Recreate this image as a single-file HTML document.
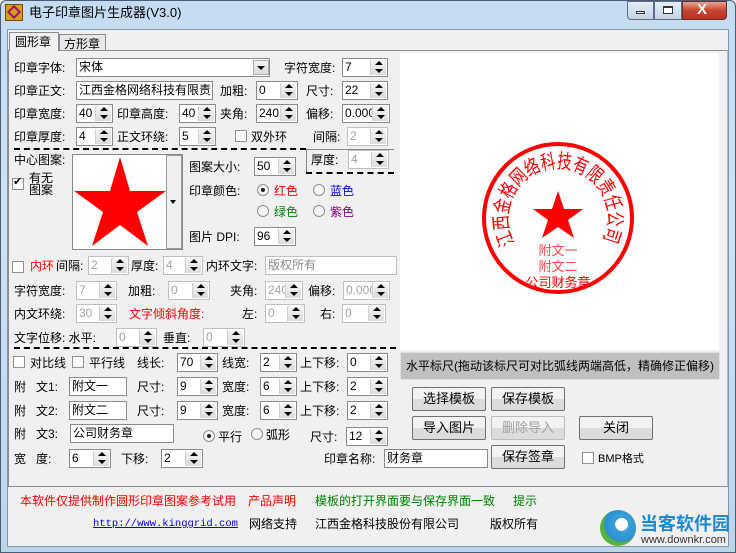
<!DOCTYPE html>
<html><head><meta charset="utf-8">
<style>
*{margin:0;padding:0;box-sizing:border-box}
body{width:736px;height:553px;overflow:hidden;background:#fff;font:12px "Liberation Sans","WenQuanYi Zen Hei","Noto Sans CJK SC",sans-serif;color:#000;position:relative}
.a{position:absolute;white-space:nowrap;line-height:14px}
.sp{position:absolute;height:19px;background:#fff;border:1px solid #8a8a8a;font:12px "Liberation Sans",sans-serif;padding:1px 0 0 2px;line-height:15px;overflow:hidden}
.sp.d{color:#a0a0a0;border-color:#c0c0c0}
.sp i{position:absolute;right:1px;top:1px;width:16px;height:15px;background:linear-gradient(#f4f4f4,#dcdcdc);border-left:1px solid #d0d0d0}
.sp i:before{content:"";position:absolute;left:4px;top:1px;border:4px solid transparent;border-bottom:4px solid #000;border-top:0}
.sp i:after{content:"";position:absolute;left:4px;top:9px;border:4px solid transparent;border-top:4px solid #000;border-bottom:0}
.tx{position:absolute;height:19px;background:#fff;border:1px solid #8a8a8a;padding:1px 2px;line-height:15px;overflow:hidden;white-space:nowrap}
.cb{position:absolute;width:12px;height:12px;border:1px solid #8e8f8f;background:#fff}
.rb{position:absolute;width:12px;height:12px;border:1px solid #8e8f8f;border-radius:50%;background:#f4f4f4}
.rb.on:after{content:"";position:absolute;left:3px;top:3px;width:4px;height:4px;border-radius:50%;background:#222}
.bt{position:absolute;height:24px;width:74px;border:1px solid #707070;border-radius:2px;background:linear-gradient(#f2f2f2 50%,#dcdcdc 50%);text-align:center;line-height:22px;font-size:13px}
.dash{position:absolute;height:0;border-top:2px dashed #000}
.r{color:#f00}.g{color:#008000}
</style></head><body>
<div class="a" style="left:0;top:0;width:736px;height:553px;background:linear-gradient(#c4dcf2,#cfe2f4 40%,#bcd4ec);border:1px solid #4b5d75;border-radius:6px 6px 0 0"></div>
<div class="a" style="left:5px;top:4px;width:18px;height:17px;background:#d4a017;border:1px solid #7a4b00"></div>
<div class="a" style="left:9px;top:7px;width:10px;height:10px;border:2px solid #a01070;transform:rotate(45deg)"></div>
<div class="a" style="left:29px;top:6px;font-size:13px">电子印章图片生成器(V3.0)</div>
<div class="a" style="left:627px;top:1px;width:27px;height:19px;border:1px solid #5a6e86;border-radius:0 0 0 4px;background:linear-gradient(#e4edf7,#c3d3e6)"></div>
<div class="a" style="left:636px;top:11px;width:9px;height:3px;background:#fff;border:1px solid #333"></div>
<div class="a" style="left:654px;top:1px;width:28px;height:19px;border:1px solid #5a6e86;background:linear-gradient(#e4edf7,#c3d3e6)"></div>
<div class="a" style="left:663px;top:6px;width:10px;height:8px;background:#fff;border:1px solid #333;border-top-width:2px"></div>
<div class="a" style="left:682px;top:1px;width:45px;height:19px;border:1px solid #6b2b23;border-radius:0 0 4px 0;background:linear-gradient(#e8a493,#c7442e 50%,#b83220)"></div>
<div class="a" style="left:697px;top:1px;font:bold 15px 'Liberation Sans';color:#fff;line-height:18px">X</div>
<div class="a" style="left:7px;top:29px;width:722px;height:518px;background:#f0f0f0;border:1px solid #8494a9"></div>
<div class="a" style="left:9px;top:32px;width:50px;height:19px;background:#f0f0f0;border:1px solid #898c95;border-bottom:0;z-index:2"></div>
<div class="a" style="left:15px;top:35px;z-index:3">圆形章</div>
<div class="a" style="left:59px;top:34px;width:47px;height:17px;border:1px solid #898c95;border-bottom:0;background:#e8e8e8"></div>
<div class="a" style="left:64px;top:37px">方形章</div>
<div class="a" style="left:8px;top:50px;width:720px;height:437px;border:1px solid #898c95;border-right-color:#bbb"></div>
<div class="a" style="left:400px;top:53px;width:319px;height:297px;background:#fff"></div>
<svg class="a" style="left:0;top:0" width="736" height="553">
<circle cx="558" cy="218" r="74" fill="none" stroke="#f00" stroke-width="4"/>
<polygon fill="#f00" points="558,191 564,209 583,209 568,220 574,238 558,227 542,238 548,220 533,209 552,209"/>
<defs><path id="arc" d="M514.7,243 A50,50 0 1 1 601.3,243"/></defs>
<text fill="#f00" font-size="20" font-family="WenQuanYi Zen Hei,sans-serif"><textPath href="#arc" textLength="206" lengthAdjust="spacingAndGlyphs">江西金格网络科技有限责任公司</textPath></text>
<text x="558" y="255" fill="#f44" font-size="13" text-anchor="middle" font-family="WenQuanYi Zen Hei,sans-serif">附文一</text>
<text x="558" y="271" fill="#f44" font-size="13" text-anchor="middle" font-family="WenQuanYi Zen Hei,sans-serif">附文二</text>
<text x="558" y="287" fill="#f00" font-size="13" text-anchor="middle" font-family="WenQuanYi Zen Hei,sans-serif">公司财务章</text>
</svg>
<div class="a" style="left:400px;top:352px;width:320px;height:28px;background:#c0c0c0;border:1px solid #e0e0e0;padding:6px 5px;line-height:14px">水平标尺(拖动该标尺可对比弧线两端高低，精确修正偏移)</div>
<div class="a" style="left:14px;top:61px">印章字体:</div>
<div class="tx" style="left:76px;top:58px;width:194px">宋体</div>
<div class="a" style="left:253px;top:60px;width:16px;height:15px;background:linear-gradient(#f4f4f4,#dcdcdc);border:1px solid #aaa"></div>
<div class="a" style="left:257px;top:66px;border:4px solid transparent;border-top:4px solid #000;border-bottom:0"></div>
<div class="a" style="left:284px;top:61px">字符宽度:</div>
<div class="sp" style="left:342px;top:58px;width:46px">7<i></i></div>
<div class="a" style="left:14px;top:84px">印章正文:</div>
<div class="tx" style="left:76px;top:81px;width:137px">江西金格网络科技有限责</div>
<div class="a" style="left:220px;top:84px">加粗:</div>
<div class="sp" style="left:256px;top:81px;width:42px">0<i></i></div>
<div class="a" style="left:306px;top:84px">尺寸:</div>
<div class="sp" style="left:342px;top:81px;width:46px">22<i></i></div>
<div class="a" style="left:14px;top:107px">印章宽度:</div>
<div class="sp" style="left:76px;top:104px;width:37px">40<i></i></div>
<div class="a" style="left:117px;top:107px">印章高度:</div>
<div class="sp" style="left:179px;top:104px;width:37px">40<i></i></div>
<div class="a" style="left:220px;top:107px">夹角:</div>
<div class="sp" style="left:256px;top:104px;width:42px">240<i></i></div>
<div class="a" style="left:306px;top:107px">偏移:</div>
<div class="sp" style="left:342px;top:104px;width:48px">0.000<i></i></div>
<div class="a" style="left:14px;top:130px">印章厚度:</div>
<div class="sp" style="left:76px;top:127px;width:37px">4<i></i></div>
<div class="a" style="left:117px;top:130px">正文环绕:</div>
<div class="sp" style="left:179px;top:127px;width:37px">5<i></i></div>
<div class="cb" style="left:235px;top:130px"></div>
<div class="a" style="left:251px;top:130px">双外环</div>
<div class="a" style="left:313px;top:130px">间隔:</div>
<div class="sp d" style="left:347px;top:127px;width:41px">2<i></i></div>
<div class="dash" style="left:14px;top:148px;width:292px"></div>
<div class="a" style="left:306px;top:149px;width:88px;height:24px;border-left:1px solid #888;border-top:1px solid #888"></div>
<div class="dash" style="left:306px;top:172px;width:88px"></div>
<div class="a" style="left:311px;top:153px">厚度:</div>
<div class="sp d" style="left:348px;top:150px;width:41px">4<i></i></div>
<div class="a" style="left:14px;top:153px">中心图案:</div>
<div class="cb" style="left:12px;top:178px"></div>
<div class="a" style="left:13px;top:175px;font-size:11px">✔</div>
<div class="a" style="left:29px;top:172px;line-height:12px">有无<br>图案</div>
<div class="a" style="left:72px;top:154px;width:111px;height:96px;background:#fff;border:1px solid #888"></div>
<div class="a" style="left:166px;top:155px;width:16px;height:94px;background:#f0f0f0;border:1px solid #999"></div>
<div class="a" style="left:170px;top:200px;border:3px solid transparent;border-top:4px solid #000;border-bottom:0"></div>
<svg class="a" style="left:72px;top:154px" width="94" height="96"><polygon fill="#f00" points="48,3 58,37 94,37 65,58 76,92 48,71 20,92 31,58 2,37 38,37"/></svg>
<div class="a" style="left:189px;top:160px">图案大小:</div>
<div class="sp" style="left:254px;top:157px;width:42px">50<i></i></div>
<div class="a" style="left:189px;top:184px">印章颜色:</div>
<div class="rb on" style="left:257px;top:184px"></div><div class="a r" style="left:274px;top:184px">红色</div>
<div class="rb" style="left:313px;top:184px"></div><div class="a" style="left:330px;top:184px;color:#00f">蓝色</div>
<div class="rb" style="left:257px;top:205px"></div><div class="a g" style="left:274px;top:205px">绿色</div>
<div class="rb" style="left:313px;top:205px"></div><div class="a" style="left:330px;top:205px;color:#800080">紫色</div>
<div class="a" style="left:189px;top:230px">图片 DPI:</div>
<div class="sp" style="left:254px;top:227px;width:42px">96<i></i></div>
<div class="cb" style="left:12px;top:261px"></div>
<div class="a r" style="left:30px;top:259px">内环</div>
<div class="a" style="left:56px;top:259px">间隔:</div>
<div class="sp d" style="left:88px;top:256px;width:41px">2<i></i></div>
<div class="a" style="left:131px;top:259px">厚度:</div>
<div class="sp d" style="left:163px;top:256px;width:40px">4<i></i></div>
<div class="a" style="left:206px;top:259px">内环文字:</div>
<div class="tx" style="left:265px;top:256px;width:132px;color:#888;border-color:#c0c0c0">版权所有</div>
<div class="a" style="left:14px;top:284px">字符宽度:</div>
<div class="sp d" style="left:76px;top:281px;width:41px">7<i></i></div>
<div class="a" style="left:128px;top:284px">加粗:</div>
<div class="sp d" style="left:168px;top:281px;width:42px">0<i></i></div>
<div class="a" style="left:230px;top:284px">夹角:</div>
<div class="sp d" style="left:265px;top:281px;width:38px">240<i></i></div>
<div class="a" style="left:308px;top:284px">偏移:</div>
<div class="sp d" style="left:343px;top:281px;width:47px">0.000<i></i></div>
<div class="a" style="left:14px;top:307px">内文环绕:</div>
<div class="sp d" style="left:76px;top:304px;width:41px">30<i></i></div>
<div class="a r" style="left:129px;top:307px">文字倾斜角度:</div>
<div class="a" style="left:242px;top:307px">左:</div>
<div class="sp d" style="left:265px;top:304px;width:40px">0<i></i></div>
<div class="a" style="left:320px;top:307px">右:</div>
<div class="sp d" style="left:342px;top:304px;width:44px">0<i></i></div>
<div class="a" style="left:14px;top:331px">文字位移: 水平:</div>
<div class="sp d" style="left:116px;top:328px;width:41px">0<i></i></div>
<div class="a" style="left:163px;top:331px">垂直:</div>
<div class="sp d" style="left:203px;top:328px;width:42px">0<i></i></div>
<div class="dash" style="left:14px;top:347px;width:382px"></div>
<div class="cb" style="left:13px;top:356px"></div>
<div class="a" style="left:30px;top:356px">对比线</div>
<div class="cb" style="left:72px;top:356px"></div>
<div class="a" style="left:89px;top:356px">平行线</div>
<div class="a" style="left:137px;top:356px">线长:</div>
<div class="sp" style="left:177px;top:353px;width:41px">70<i></i></div>
<div class="a" style="left:222px;top:356px">线宽:</div>
<div class="sp" style="left:260px;top:353px;width:37px">2<i></i></div>
<div class="a" style="left:300px;top:356px">上下移:</div>
<div class="sp" style="left:347px;top:353px;width:41px">0<i></i></div>
<div class="a" style="left:14px;top:380px">附&nbsp;&nbsp; 文1:</div>
<div class="tx" style="left:69px;top:377px;width:58px">附文一</div>
<div class="a" style="left:137px;top:380px">尺寸:</div>
<div class="sp" style="left:177px;top:377px;width:41px">9<i></i></div>
<div class="a" style="left:222px;top:380px">宽度:</div>
<div class="sp" style="left:260px;top:377px;width:37px">6<i></i></div>
<div class="a" style="left:300px;top:380px">上下移:</div>
<div class="sp" style="left:347px;top:377px;width:41px">2<i></i></div>
<div class="a" style="left:14px;top:404px">附&nbsp;&nbsp; 文2:</div>
<div class="tx" style="left:69px;top:401px;width:58px">附文二</div>
<div class="a" style="left:137px;top:404px">尺寸:</div>
<div class="sp" style="left:177px;top:401px;width:41px">9<i></i></div>
<div class="a" style="left:222px;top:404px">宽度:</div>
<div class="sp" style="left:260px;top:401px;width:37px">6<i></i></div>
<div class="a" style="left:300px;top:404px">上下移:</div>
<div class="sp" style="left:347px;top:401px;width:41px">2<i></i></div>
<div class="a" style="left:14px;top:427px">附&nbsp;&nbsp; 文3:</div>
<div class="tx" style="left:70px;top:424px;width:104px">公司财务章</div>
<div class="rb on" style="left:203px;top:430px"></div><div class="a" style="left:218px;top:430px">平行</div>
<div class="rb" style="left:251px;top:428px"></div><div class="a" style="left:266px;top:428px">弧形</div>
<div class="a" style="left:310px;top:430px">尺寸:</div>
<div class="sp" style="left:346px;top:427px;width:42px">12<i></i></div>
<div class="a" style="left:14px;top:452px">宽&nbsp;&nbsp; 度:</div>
<div class="sp" style="left:69px;top:449px;width:42px">6<i></i></div>
<div class="a" style="left:121px;top:452px">下移:</div>
<div class="sp" style="left:161px;top:449px;width:42px">2<i></i></div>
<div class="a" style="left:324px;top:452px">印章名称:</div>
<div class="tx" style="left:384px;top:449px;width:104px">财务章</div>
<div class="bt" style="left:412px;top:387px">选择模板</div>
<div class="bt" style="left:491px;top:387px">保存模板</div>
<div class="bt" style="left:412px;top:416px">导入图片</div>
<div class="bt" style="left:491px;top:416px;color:#a0a0a0;border-color:#bbb">删除导入</div>
<div class="bt" style="left:579px;top:416px">关闭</div>
<div class="bt" style="left:491px;top:445px">保存签章</div>
<div class="cb" style="left:582px;top:452px"></div>
<div class="a" style="left:598px;top:452px;font-size:11px">BMP格式</div>
<div class="a r" style="left:20px;top:494px">本软件仅提供制作圆形印章图案参考试用</div>
<div class="a r" style="left:248px;top:494px">产品声明</div>
<div class="a g" style="left:315px;top:494px">模板的打开界面要与保存界面一致</div>
<div class="a g" style="left:513px;top:494px">提示</div>
<div class="a" style="left:93px;top:518px;color:#00f;text-decoration:underline;font:10.5px 'Liberation Mono',monospace">http://www.kinggrid.com</div>
<div class="a" style="left:249px;top:517px">网络支持</div>
<div class="a" style="left:315px;top:517px">江西金格科技股份有限公司</div>
<div class="a" style="left:490px;top:517px">版权所有</div>
<div class="a" style="left:600px;top:510px;width:36px;height:36px;border-radius:50%;background:radial-gradient(circle at 60% 40%,#fff 20%,#3aa0d8 22%,#2b8fd0 55%,#57b33a 60%)"></div>
<div class="a" style="left:640px;top:514px;font-weight:bold;font-size:18px;color:#1e8ad6;line-height:20px">当客软件园</div>
<div class="a" style="left:641px;top:534px;font-size:11px;color:#333;line-height:12px">www.downkr.com</div>
</body></html>
